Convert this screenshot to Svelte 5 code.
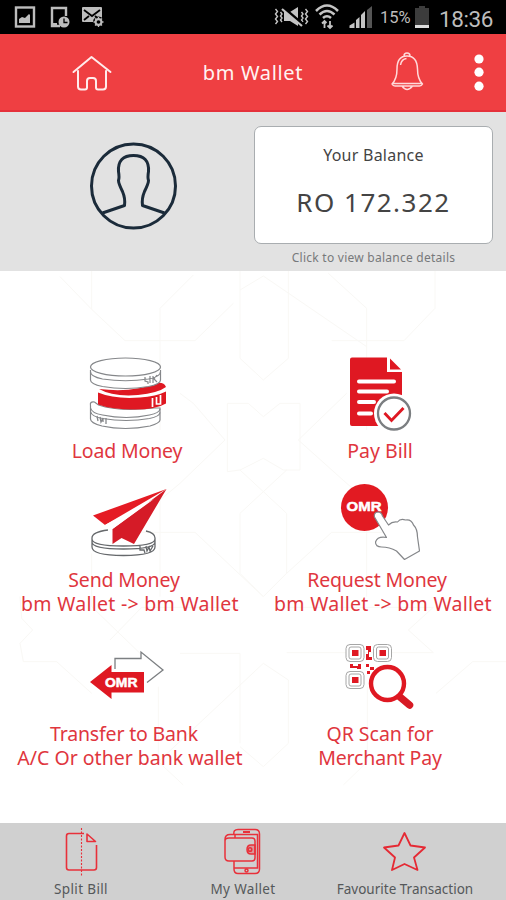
<script>
  const time = '18:36';
  const battery = '15%';
</script>

<div class="phone">
  <div class="status">
    <svg class="notes" width="110" height="34" viewBox="0 0 110 34" fill="none" stroke="#bdbdbd">
      <rect x="16" y="7.500" width="18" height="19" stroke-width="2.400" />
      <path d="M19 23v-4l3-2 3 1 4-4 1 1v8z" fill="#bdbdbd" stroke="none" />
      <path d="M60 26h-8V8h14v8" stroke-width="2.400" />
      <path d="M51 23h6v4h-6z" fill="#bdbdbd" stroke="none" />
      <circle cx="64" cy="22" r="5.500" fill="#bdbdbd" stroke="none" />
      <path d="M64 18.500V22.500h3.500" stroke="#000" stroke-width="1.300" />
      <rect x="82" y="7" width="20" height="15" rx="1" fill="#bdbdbd" stroke="none" />
      <path d="M84 10l8 6 8-6M84 20l5-4M100 20l-5-4" stroke="#000" stroke-width="1.800" />
      <circle cx="98.500" cy="22" r="5.500" fill="#000" stroke="none" />
      <circle cx="98.500" cy="22" r="3" stroke-width="1.800" />
      <path d="M98.500 17v10M93.500 22h10M95 18.500l7 7M102 18.500l-7 7" stroke-width="1.300" />
      <circle cx="98.500" cy="22" r="1.800" fill="#000" stroke="none" />
    </svg>
    <div class="system">
      <svg width="108" height="34" viewBox="272 0 108 34" fill="none" stroke="#c4c4c4">
        <path d="M275.500 9l2 2.500-2 2.500 2 2.500-2 2.500 2 2.500-2 2.500M280.500 12l1.500 2-1.500 2 1.500 2-1.500 2 1.500 2M301.500 12l1.500 2-1.500 2 1.500 2-1.500 2 1.500 2M305.500 9l2 2.500-2 2.500 2 2.500-2 2.500 2 2.500-2 2.500" stroke-width="1.400" />
        <path d="M284 12h6l8-5v19l-8-5h-6z" fill="#c4c4c4" stroke="none" />
        <path d="M283.500 8l20 17" stroke="#000" stroke-width="3" />
        <path d="M282 9l20 17" stroke-width="2.200" />
        <path d="M316 11q11-11 22 0M319.500 14.500q7.500-7 15 0M323 18q4-3.500 8 0" stroke-width="2.500" />
        <path d="M324.500 28v-7m-2.500 2.500l2.500-2.500 2 2M330 21v7m-2.500-2.500l2.500 2.500 2.500-2.500" stroke-width="1.800" />
        <path d="M349.500 28v-2.500l5-3V28zM356 28v-8l3.500-3v11zM361 28V15l4-4v17z" fill="#c4c4c4" stroke="none" />
        <path d="M367 28V10l5-4v22z" fill="#555" stroke="none" />
      </svg>
      <span class="percent">{battery}</span>
      <svg width="17" height="34" viewBox="0 0 17 34">
        <path d="M1 8h4V6h6v2h4v18H1z" fill="#3c3c3c" />
        <path d="M1 25h14v3H1z" fill="#ddd" />
      </svg>
      <span class="time">{time}</span>
    </div>
  </div>

  <header>
    <svg class="home" width="44" height="44" viewBox="70 51 44 44" fill="none" stroke="#ffecec" stroke-width="2" stroke-linejoin="round" stroke-linecap="round">
      <path d="M73.500 73L91.500 58l19 15M78 72v15.500q0 3 3 3h4q2 0 2-2V82q0-3 3-3h3q3 0 3 3v6.500q0 2 2 2h5q3 0 3-3V72" />
    </svg>
    <h1>bm Wallet</h1>
    <svg class="bell" width="38" height="44" viewBox="388 51 38 44" fill="none" stroke="#ffdada" stroke-width="1.500" stroke-linejoin="round">
      <path d="M392 85q5-5 5-15 0-13 10-13t10.500 13q0 10 5 15-1 2-3 2h-24.500q-2 0-3-2zM393 84.500h28.500M402 87q5 7 10.500 0M404 57q0-3 3-3t3 3M400.500 66q1-6 6-6.500" />
    </svg>
    <svg class="more" width="12" height="44" viewBox="473 51 12 44" fill="#fff">
      <circle cx="479" cy="60" r="4.600" /><circle cx="479" cy="73.200" r="4.600" /><circle cx="479" cy="87.200" r="4.600" />
    </svg>
  </header>

  <section class="profile">
    <div class="person">
      <svg width="90" height="90" viewBox="88 141 90 90" fill="none" stroke="#1b2b3a" stroke-width="3" stroke-linejoin="round">
        <circle cx="133.500" cy="186" r="42" />
        <path d="M102.500 213l22-7.500q1-7-2-14-4-8-4-11 1-3 0-9-1-16 15-16t15 16q-1 6 0 9 0 3-4 11-3 7-2 14l22 7.500" />
      </svg>
    </div>
    <div class="balance">
      <div class="card">
        <span class="caption">Your Balance</span>
        <span class="amount">RO 172.322</span>
      </div>
      <span class="hint">Click to view balance details</span>
    </div>
  </section>

  <main>
    <svg class="pattern" width="506" height="552" viewBox="0 3 1518 1656" fill="none" stroke="#f9f8f5" stroke-width="3">
      <path d="M180 20l95 98 100 94h210l115-112M275 0v118M480 480V115L580 15M720 0v265l70 65 75-65V0M720 60l70-42 310 212M1305 0v115l-93 97H995M1100 480V115L985 10M540 370l40 30 95 110-135 130-60 50v290M682 400v205l38-5 70-35 60 35h50V400h-60l-50 40-45-40zM1040 370L895 510l145 130 60 50v290M720 600l70 65 70-65M790 665l-70 65v180l70 70 70-70V730zM330 830l45-43h210l205 193M275 850v160l145 140M1250 830l-38-43H995L860 910M60 980l5 65 33 35-38 40 10 55h100l105 95M330 1110l95-98h295M860 1012h440l-75 68 75 68H860M720 1420v-270H540M475 1250v225l75 70M1102 1250v225l-72 70M720 1430l70 60 75-70v-190l-75-50-315 295M1518 1175h-100l-110 95" />
    </svg>

    <div class="tile row1">
      <svg width="110" height="86" viewBox="75 353 110 86" fill="none" stroke="#85878a" stroke-width="1.200">
        <path d="M90.500 406q-1-5 4-4l4 3q20 7 56 3l5.500 0v12q0 3-10 6-25 5-48 0-11.500-3-11.500-7z" fill="#fff" />
        <path d="M90.500 408q1 5 12 7 24 5 47 0 10-2 10.500-6M90.500 411.500q1 5 12 7 24 4 47 0 10-2 10.500-6" />
        <path d="M97 416l1 5m2-4l1 5 2-4v4m3-4v6" stroke-width="1.300" />
        <path d="M99 389q34 4 58-6 7-1 9 4-8 6-28 8-25 2-39-6zM98 392.500q17 7 42 5 16-1 26-6v12q-10 6-31 6-24 0-37-5z" fill="#df1822" stroke="none" />
        <path d="M152.500 398v9m4-10v7h4V395" stroke="#fff" stroke-width="1.700" />
        <path d="M90.500 370v10q0 4 12 6.500 23 4 46 0 12-2.500 12-6.500v-10" fill="#fff" />
        <ellipse cx="125.500" cy="367" rx="35" ry="9" fill="#fff" />
        <path d="M90.500 372q0 4.500 12 7 23 3.500 46 0 12-2.500 12-7M145 377v4l3 1v2M150 376v7m3-7v7m4-8l-3 4 3 3" />
      </svg>
      <p class="short ls-load">Load Money</p>
    </div>

    <div class="tile row1">
      <svg width="110" height="86" viewBox="328 353 110 86">
        <path d="M352 357.500h35v14.500h15v54h-50q-2 0-2-2v-64.500q0-2 2-2z" fill="#df1822" />
        <path d="M390 358.500v11h11z" fill="#df1822" />
        <path d="M359 381.500h35M359 391.500h28M359 402h15M359 413.500h12" stroke="#fff" stroke-width="4" stroke-linecap="round" />
        <circle cx="394" cy="413.500" r="20" fill="#fff" />
        <circle cx="394" cy="413.500" r="16" fill="#fff" stroke="#7b7e81" stroke-width="2.300" />
        <path d="M384.500 413l7 7.500L403.500 408" fill="none" stroke="#df1822" stroke-width="2.900" />
      </svg>
      <p class="short ls-pay">Pay Bill</p>
    </div>

    <div class="tile row2">
      <svg width="110" height="88" viewBox="75 480 110 88" fill="none" stroke="#66696c" stroke-width="1.300">
        <path d="M108 530q-16 2-16 8v9q0 8.500 31.500 8.500t31.500-8.500v-9q0-5-9-7M92 539q0 7 31.500 7t31.500-7M92 542q0 7 31.500 7t31.500-7M140 546v4h4l1 3M146 546l1 5 2-4 1 4 3-5" />
        <path d="M166.500 489L93 515.500l12 9.500z" fill="#e51b24" stroke="none" />
        <path d="M166.500 489L112.500 529v15l9-6 12.500 6z" fill="#d51b27" stroke="none" />
        <path d="M154 499l-49 26 7.500 4z" fill="#fff" stroke="none" />
      </svg>
      <p><span class="short ls-send">Send Money</span><span class="long">bm Wallet -&gt; bm Wallet</span></p>
    </div>

    <div class="tile row2">
      <svg width="110" height="88" viewBox="328 480 110 88">
        <circle cx="364.500" cy="507.500" r="23.500" fill="#e21a22" />
        <text x="346.500" y="510.500" font-family="Liberation Sans, Arial, sans-serif" font-weight="700" font-size="13.500" textLength="35" lengthAdjust="spacingAndGlyphs" fill="#fff" stroke="#fff" stroke-width=".5">OMR</text>
        <path d="M374.500 517q-1-4 3-5 4 0 5 4l6 9q4-4 9-3 3-4 8-2 6-1 8 5 4 4 4 12l2 14-15 8.500-8-8.500q-7-4-15-4-6 0-6-5 2-6 11-4.500z" fill="#fff" stroke="#85878a" stroke-width="1.200" stroke-linejoin="round" />
      </svg>
      <p><span class="request">Request Money</span><span class="long">bm Wallet -&gt; bm Wallet</span></p>
    </div>

    <div class="tile row3">
      <svg width="110" height="86" viewBox="75 636 110 86">
        <path d="M115 669v-10.500h26V652l22 18-16 12.500" fill="none" stroke="#7c7f82" stroke-width="1.300" />
        <path d="M90 682l21.500-17v7H144v20.500h-32.500V699z" fill="#df1822" />
        <text x="105" y="686.500" font-family="Liberation Sans, Arial, sans-serif" font-weight="700" font-size="12.500" textLength="32.500" lengthAdjust="spacingAndGlyphs" fill="#fff" stroke="#fff" stroke-width=".5">OMR</text>
      </svg>
      <p><span class="transfer">Transfer to Bank</span><span>A/C Or other bank wallet</span></p>
    </div>

    <div class="tile row3">
      <svg width="110" height="86" viewBox="328 636 110 86">
        <g fill="#fff" stroke="#a6a6a6" stroke-width="1">
          <rect x="346" y="644.500" width="18" height="17" rx="4" /><rect x="349" y="647" width="12" height="12" rx="2" />
          <rect x="373.500" y="644.500" width="18" height="17" rx="4" /><rect x="376.500" y="647" width="12" height="12" rx="2" />
          <rect x="346" y="671.500" width="18" height="17" rx="4" /><rect x="349" y="674" width="12" height="12" rx="2" />
        </g>
        <path d="M352 650h6.500v6H352zM379.500 650h6.500v6h-6.500zM352 677h6.500v6H352zM366 646h5v6h-2v5h3v3h-6v-6h2v-4h-2zM350 664h3v2h5v-2h3v5h-4v-1h-7zM366 664h3v3h-3zM370 667h4v3h-4zM367 671h3v3h-3z" fill="#df1822" />
        <path d="M400 697l9.500 8" stroke="#d71a24" stroke-width="7.500" stroke-linecap="round" />
        <circle cx="387.500" cy="683.500" r="16.500" fill="#fff" stroke="#df1822" stroke-width="4.400" />
      </svg>
      <p class="short"><span>QR Scan for</span><span class="merchant">Merchant Pay</span></p>
    </div>
  </main>

  <footer>
    <div class="nav">
      <svg width="44" height="50" viewBox="59 827 44 50" fill="none" stroke="#e8303a" stroke-width="1.600">
        <path d="M84 833.500H69q-2.500 0-2.500 2.500v31.500q0 2.500 2.500 2.500h25q2.500 0 2.500-2.500V845M87 834v7.500h8.500z" stroke-linejoin="round" />
        <path d="M81.500 828v48" stroke-width="1.100" stroke-dasharray="2 1.500" />
      </svg>
      <span class="wide">Split Bill</span>
    </div>
    <div class="nav">
      <svg width="44" height="50" viewBox="221 827 44 50" fill="none" stroke="#e8303a" stroke-width="1.500">
        <path d="M234 834.500q-1-5 4-5h17q4.500 0 4.500 4.500v35q0 4.500-4.500 4.500h-17q-4 0-4-4.500V861M235 834.500h22.500V868H234M235 838v-3.500h-5q-5 0-5 5V857q0 4 4 4h23q3 0 3-3v-17q0-3-3-3h-23q-4 0-4 3" />
        <path d="M255 845h-4q-4 0-4 4.500t4 4.500h4z" fill="#e8303a" fill-opacity=".35" /><circle cx="250" cy="849.500" r="1.800" /><circle cx="246.500" cy="870.500" r="1.500" /><path d="M243 832h7" stroke-width="2" />
      </svg>
      <span class="wide">My Wallet</span>
    </div>
    <div class="nav">
      <svg width="50" height="50" viewBox="380 827 50 50" fill="none" stroke="#e52a34" stroke-width="1.800" stroke-linejoin="round">
        <path d="M404.500 833l6 12.500 14.500 2-11 10 3.500 12.500-13-6-12.500 6 3-12.500-11-10 14.500-2z" />
      </svg>
      <span>Favourite Transaction</span>
    </div>
  </footer>
</div>

<style>
  :global(body) { margin: 0; }
  .phone { width: 506px; height: 900px; display: flex; flex-direction: column; overflow: hidden; background: #fff; font-family: "Noto Sans", "Open Sans", sans-serif; }
  svg { display: block; flex: none; }
  span, p, h1 { white-space: nowrap; }
  .status { height: 34px; background: #000; display: flex; justify-content: space-between; font-family: Roboto, sans-serif; color: #bdbdbd; }
  .system { display: flex; align-items: center; width: 234px; }
  .percent { width: 34px; font-size: 16.500px; }
  .time { margin-left: 8px; margin-top: 3px; font-size: 22.500px; line-height: 32px; letter-spacing: -.4px; }
  header { height: 78px; box-sizing: border-box; border-bottom: 2px solid #e5303a; background: #ef3f42; display: flex; align-items: center; }
  .home { margin-left: 70px; }
  h1 { width: 274px; margin: 0; padding-left: 4px; box-sizing: border-box; text-align: center; color: #fff3f2; font-size: 20px; font-weight: 400; letter-spacing: .65px; }
  .more { margin-left: 47px; }
  .profile { height: 159px; background: #e2e2e2; display: flex; }
  .person { width: 254px; padding: 29px 0 0 88px; box-sizing: border-box; }
  .balance { width: 239px; padding-top: 14px; display: flex; flex-direction: column; align-items: center; }
  .card { width: 239px; height: 118px; box-sizing: border-box; border: 1px solid #a9adb0; border-radius: 7px; background: #fff; display: flex; flex-direction: column; align-items: center; color: #444; }
  .caption { margin-top: 16px; line-height: 24px; font-size: 16px; letter-spacing: .25px; }
  .amount { margin-top: 18px; line-height: 34px; font-size: 26px; letter-spacing: 1.500px; }
  .hint { line-height: 26px; margin-top: 1px; font-size: 12px; letter-spacing: .25px; color: #77797b; }
  main { height: 552px; box-sizing: border-box; position: relative; padding-top: 82px; display: grid; grid-template-columns: 260px 246px; grid-template-rows: 127px 156px 187px; }
  .pattern { position: absolute; left: 0; top: 0; }
  .tile { position: relative; display: flex; flex-direction: column; align-items: center; }
  p { margin: 0; display: flex; flex-direction: column; align-items: center; color: #e0363e; font-size: 19.500px; line-height: 24px; }
  .short { padding-right: 6px; }
  .ls-load, .ls-send { letter-spacing: -.15px; }
  .ls-send, .request, .transfer { padding-right: 12px; }
  .request, .transfer, .merchant { letter-spacing: -.17px; }
  .long { letter-spacing: .28px; }
  footer { height: 77px; background: #d0d0d0; display: flex; }
  .nav { width: 162px; display: flex; flex-direction: column; align-items: center; padding-top: 4px; box-sizing: border-box; color: #55585a; font-size: 13.500px; line-height: 20px; }
  .nav span { margin-top: 2px; }
  .wide { letter-spacing: .35px; }
</style>
